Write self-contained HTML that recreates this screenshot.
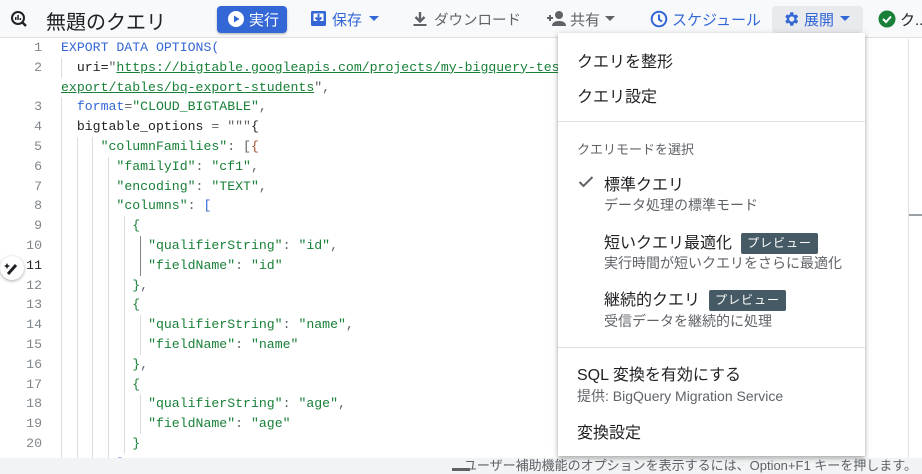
<!DOCTYPE html>
<html><head><meta charset="utf-8"><style>
*{margin:0;padding:0;box-sizing:border-box}
body{width:922px;height:474px;overflow:hidden;background:#fff;font-family:"Liberation Sans","Noto Sans CJK JP",sans-serif;position:relative}
.hdr{position:absolute;left:0;top:0;width:922px;height:38px;background:#f8f9fa;border-bottom:1px solid #e0e0e0}
.ab{position:absolute;white-space:nowrap}
.code{position:absolute;left:0;top:38px;width:922px;height:420px;overflow:hidden;font-family:"Liberation Mono",monospace;font-size:13.2px}
.row{position:absolute;left:0;height:19.8px;line-height:19.8px;width:922px}
.ln{position:absolute;left:0;width:42px;text-align:right;color:#80868b}
.tx{position:absolute;left:61px;white-space:pre;color:#202124}
.g{position:absolute;top:0;width:1px;height:19.8px;background:#dadce0}
.k{color:#3367d6}.s{color:#188038}.p{color:#5f6368}.u{color:#188038;text-decoration:underline}
.menu{position:absolute;left:558px;top:33px;width:307px;height:423px;background:#fff;box-shadow:0 2px 4px rgba(0,0,0,.3),0 1px 8px rgba(0,0,0,.1);color:#202124}
.menu .ab{font-size:16px}
.menu .sub{font-size:14px;color:#5f6368}
.menu .sm{font-size:13px;color:#5f6368}
.bd{display:inline-block;background:#455a64;color:#fff;font-size:12px;padding:0 6px;line-height:21px;height:21px;border-radius:2px;margin-left:9px;vertical-align:middle;letter-spacing:1px}
.div{position:absolute;left:0;width:307px;height:1px;background:#e0e0e0}
</style></head><body>
<div class="hdr">
 <svg class="ab" style="left:10px;top:10px" width="18" height="18" viewBox="0 0 18 18"><circle cx="8" cy="8" r="6" fill="none" stroke="#202124" stroke-width="2"/><line x1="12" y1="12" x2="16" y2="16" stroke="#202124" stroke-width="2.4"/><rect x="5" y="7" width="1.5" height="3" fill="#202124"/><rect x="7.3" y="5" width="1.5" height="5" fill="#202124"/><rect x="9.6" y="8" width="1.5" height="2" fill="#202124"/></svg>
 <div class="ab" style="left:46px;top:6px;font-size:20px;color:#202124">無題のクエリ</div>
 <div class="ab" style="left:217px;top:6px;width:70px;height:27px;background:#3367d6;border-radius:4px;box-shadow:0 1px 2px rgba(0,0,0,.3)"></div>
 <svg class="ab" style="left:227px;top:10px" width="18" height="18"><circle cx="9" cy="9" r="8" fill="#fff"/><path d="M7 5.5L12.5 9L7 12.5Z" fill="#3367d6"/></svg>
 <div class="ab" style="left:249px;top:9px;font-size:15px;color:#fff">実行</div>
 <svg class="ab" style="left:310px;top:10px" width="17" height="17"><rect x="1" y="1" width="15" height="15" rx="1.5" fill="#3367d6"/><rect x="3.5" y="3.5" width="10" height="10" fill="#fff"/><path d="M8.5 4v6M5.5 7.5l3 3 3-3" stroke="#3367d6" stroke-width="2" fill="none"/><rect x="3.5" y="11" width="10" height="2.5" fill="#3367d6"/></svg>
 <div class="ab" style="left:332px;top:9px;font-size:15px;color:#3367d6">保存</div>
 <div class="ab" style="left:369px;top:16px;border:5px solid transparent;border-top-color:#3367d6;border-bottom:0"></div>
 <svg class="ab" style="left:412px;top:11px" width="16" height="16"><path d="M8 1v9M3.5 6l4.5 4.5L12.5 6" stroke="#5f6368" stroke-width="2.4" fill="none"/><rect x="1.5" y="13" width="13" height="2" fill="#5f6368"/></svg>
 <div class="ab" style="left:434px;top:9px;font-size:14.5px;color:#5f6368">ダウンロード</div>
 <svg class="ab" style="left:546px;top:10px" width="22" height="17"><path d="M1 8h6M4 5v6" stroke="#5f6368" stroke-width="2"/><circle cx="13" cy="5" r="4" fill="#5f6368"/><path d="M6 16c0-4 4-5 7-5s7 1 7 5z" fill="#5f6368"/></svg>
 <div class="ab" style="left:570px;top:9px;font-size:15px;color:#5f6368">共有</div>
 <div class="ab" style="left:605px;top:16px;border:5px solid transparent;border-top-color:#5f6368;border-bottom:0"></div>
 <svg class="ab" style="left:650px;top:10px" width="18" height="18"><circle cx="9" cy="9" r="7.3" fill="none" stroke="#3367d6" stroke-width="2"/><path d="M9 4.5v5l3 2" stroke="#3367d6" stroke-width="2" fill="none"/></svg>
 <div class="ab" style="left:672px;top:9px;font-size:15px;color:#3367d6">スケジュール</div>
 <div class="ab" style="left:772px;top:6px;width:91px;height:27px;background:#e8eaed;border-radius:4px"></div>
 <svg class="ab" style="left:782px;top:10px" width="18" height="18" viewBox="0 0 24 24"><path fill="#3367d6" d="M19.4 13a7.5 7.5 0 000-2l2.1-1.6-2-3.5-2.5 1a7.3 7.3 0 00-1.7-1L15 3h-4l-.4 2.9c-.6.3-1.2.6-1.7 1l-2.5-1-2 3.5L6.5 11a7.5 7.5 0 000 2l-2.1 1.6 2 3.5 2.5-1c.5.4 1.1.7 1.7 1L11 21h4l.4-2.9c.6-.3 1.2-.6 1.7-1l2.5 1 2-3.5zM13 15.5a3.5 3.5 0 110-7 3.5 3.5 0 010 7z"/></svg>
 <div class="ab" style="left:804px;top:9px;font-size:15px;color:#3367d6">展開</div>
 <div class="ab" style="left:840px;top:16px;border:5px solid transparent;border-top-color:#3367d6;border-bottom:0"></div>
 <svg class="ab" style="left:878px;top:10px" width="18" height="18"><circle cx="9" cy="9" r="8.5" fill="#188038"/><path d="M5 9l3 3 5-5.5" stroke="#fff" stroke-width="2" fill="none"/></svg>
 <div class="ab" style="left:900px;top:9px;font-size:15px;color:#202124">ク..</div>
</div>

<div class="code">
<div class="row" style="top:0"><span class="ln">1</span><span class="tx"><span class="k">EXPORT DATA OPTIONS(</span></span></div>
<div class="row" style="top:19.8px"><span class="ln">2</span><i class="g" style="left:61px"></i><span class="tx">  uri=<span class="p">"</span><span class="u">https://bigtable.googleapis.com/projects/my-bigquery-test/instances/bq-export-instance/tables/</span></span></div>
<div class="row" style="top:39.6px"><span class="tx"><span class="u">export/tables/bq-export-students</span><span class="p">",</span></span></div>
<div class="row" style="top:59.4px"><span class="ln">3</span><i class="g" style="left:61px"></i><span class="tx">  <span class="k">format</span><span class="p">=</span><span class="s">"CLOUD_BIGTABLE"</span><span class="p">,</span></span></div>
<div class="row" style="top:79.2px"><span class="ln">4</span><i class="g" style="left:61px"></i><span class="tx">  bigtable_options <span class="p">=</span> <span class="p">"""</span>{</span></div>
<div class="row" style="top:99px"><span class="ln">5</span><i class="g" style="left:61px"></i><i class="g" style="left:77px"></i><i class="g" style="left:92px"></i><span class="tx">     <span class="s">"columnFamilies"</span><span class="p">: [</span><span style="color:#a0522d">{</span></span></div>
<div class="row" style="top:118.8px"><span class="ln">6</span><i class="g" style="left:61px"></i><i class="g" style="left:77px"></i><i class="g" style="left:92px"></i><i class="g" style="left:108px"></i><span class="tx">       <span class="s">"familyId"</span><span class="p">: </span><span class="s">"cf1"</span><span class="p">,</span></span></div>
<div class="row" style="top:138.6px"><span class="ln">7</span><i class="g" style="left:61px"></i><i class="g" style="left:77px"></i><i class="g" style="left:92px"></i><i class="g" style="left:108px"></i><span class="tx">       <span class="s">"encoding"</span><span class="p">: </span><span class="s">"TEXT"</span><span class="p">,</span></span></div>
<div class="row" style="top:158.4px"><span class="ln">8</span><i class="g" style="left:61px"></i><i class="g" style="left:77px"></i><i class="g" style="left:92px"></i><i class="g" style="left:108px"></i><span class="tx">       <span class="s">"columns"</span><span class="p">: </span><span class="k">[</span></span></div>
<div class="row" style="top:178.2px"><span class="ln">9</span><i class="g" style="left:61px"></i><i class="g" style="left:77px"></i><i class="g" style="left:92px"></i><i class="g" style="left:108px"></i><i class="g" style="left:124px"></i><span class="tx">         <span class="s">{</span></span></div>
<div class="row" style="top:198px"><span class="ln">10</span><i class="g" style="left:61px"></i><i class="g" style="left:77px"></i><i class="g" style="left:92px"></i><i class="g" style="left:108px"></i><i class="g" style="left:124px"></i><i class="g" style="left:140px;background:#80868b"></i><span class="tx">           <span class="s">"qualifierString"</span><span class="p">: </span><span class="s">"id"</span><span class="p">,</span></span></div>
<div class="row" style="top:217.8px"><span class="ln" style="color:#202124">11</span><i class="g" style="left:61px"></i><i class="g" style="left:77px"></i><i class="g" style="left:92px"></i><i class="g" style="left:108px"></i><i class="g" style="left:124px"></i><i class="g" style="left:140px;background:#80868b"></i><span class="tx">           <span class="s">"fieldName"</span><span class="p">: </span><span class="s">"id"</span></span></div>
<div class="row" style="top:237.6px"><span class="ln">12</span><i class="g" style="left:61px"></i><i class="g" style="left:77px"></i><i class="g" style="left:92px"></i><i class="g" style="left:108px"></i><i class="g" style="left:124px"></i><span class="tx">         <span class="s">}</span><span class="p">,</span></span></div>
<div class="row" style="top:257.4px"><span class="ln">13</span><i class="g" style="left:61px"></i><i class="g" style="left:77px"></i><i class="g" style="left:92px"></i><i class="g" style="left:108px"></i><i class="g" style="left:124px"></i><span class="tx">         <span class="s">{</span></span></div>
<div class="row" style="top:277.2px"><span class="ln">14</span><i class="g" style="left:61px"></i><i class="g" style="left:77px"></i><i class="g" style="left:92px"></i><i class="g" style="left:108px"></i><i class="g" style="left:124px"></i><i class="g" style="left:140px"></i><span class="tx">           <span class="s">"qualifierString"</span><span class="p">: </span><span class="s">"name"</span><span class="p">,</span></span></div>
<div class="row" style="top:297px"><span class="ln">15</span><i class="g" style="left:61px"></i><i class="g" style="left:77px"></i><i class="g" style="left:92px"></i><i class="g" style="left:108px"></i><i class="g" style="left:124px"></i><i class="g" style="left:140px"></i><span class="tx">           <span class="s">"fieldName"</span><span class="p">: </span><span class="s">"name"</span></span></div>
<div class="row" style="top:316.8px"><span class="ln">16</span><i class="g" style="left:61px"></i><i class="g" style="left:77px"></i><i class="g" style="left:92px"></i><i class="g" style="left:108px"></i><i class="g" style="left:124px"></i><span class="tx">         <span class="s">}</span><span class="p">,</span></span></div>
<div class="row" style="top:336.6px"><span class="ln">17</span><i class="g" style="left:61px"></i><i class="g" style="left:77px"></i><i class="g" style="left:92px"></i><i class="g" style="left:108px"></i><i class="g" style="left:124px"></i><span class="tx">         <span class="s">{</span></span></div>
<div class="row" style="top:356.4px"><span class="ln">18</span><i class="g" style="left:61px"></i><i class="g" style="left:77px"></i><i class="g" style="left:92px"></i><i class="g" style="left:108px"></i><i class="g" style="left:124px"></i><i class="g" style="left:140px"></i><span class="tx">           <span class="s">"qualifierString"</span><span class="p">: </span><span class="s">"age"</span><span class="p">,</span></span></div>
<div class="row" style="top:376.2px"><span class="ln">19</span><i class="g" style="left:61px"></i><i class="g" style="left:77px"></i><i class="g" style="left:92px"></i><i class="g" style="left:108px"></i><i class="g" style="left:124px"></i><i class="g" style="left:140px"></i><span class="tx">           <span class="s">"fieldName"</span><span class="p">: </span><span class="s">"age"</span></span></div>
<div class="row" style="top:396px"><span class="ln">20</span><i class="g" style="left:61px"></i><i class="g" style="left:77px"></i><i class="g" style="left:92px"></i><i class="g" style="left:108px"></i><i class="g" style="left:124px"></i><span class="tx">         <span class="s">}</span></span></div>
<div class="row" style="top:415.8px"><i class="g" style="left:61px"></i><i class="g" style="left:77px"></i><i class="g" style="left:92px"></i><i class="g" style="left:108px"></i><span class="tx">       <span class="k">]</span></span></div>
</div>
<div class="ab" style="left:0;top:256px;width:24px;height:24px;border-radius:12px;background:#fff;box-shadow:0 1px 3px rgba(0,0,0,.35)"></div>
<svg class="ab" style="left:4px;top:260px" width="16" height="16"><path d="M4 14L12 5" stroke="#202124" stroke-width="3"/><path d="M3 3l1 2 2 1-2 1-1 2-1-2-2-1 2-1z" fill="#202124"/></svg>
<div class="ab" style="left:908px;top:39px;width:1px;height:419px;background:#e0e0e0"></div>
<div class="ab" style="left:909px;top:214px;width:13px;height:2px;background:#9aa0a6"></div>
<div class="ab" style="left:0;top:458px;width:922px;height:16px;background:#f1f3f4"></div>
<div class="ab" style="left:452px;top:468px;width:18px;height:3px;background:#5f6368"></div>
<div class="ab" style="right:5px;top:457px;font-size:13px;color:#5f6368;line-height:17px">ユーザー補助機能のオプションを表示するには、Option+F1 キーを押します。</div>

<div class="menu">
 <div class="ab" style="left:19px;top:15px">クエリを整形</div>
 <div class="ab" style="left:19px;top:50px">クエリ設定</div>
 <div class="div" style="top:88px"></div>
 <div class="ab sm" style="left:19px;top:106px">クエリモードを選択</div>
 <svg class="ab" style="left:20px;top:142px" width="16" height="14"><path d="M1.5 7l4 4 9-9" stroke="#5f6368" stroke-width="2" fill="none"/></svg>
 <div class="ab" style="left:46px;top:138px">標準クエリ</div>
 <div class="ab sub" style="left:46px;top:162px">データ処理の標準モード</div>
 <div class="ab" style="left:46px;top:196px">短いクエリ最適化<span class="bd">プレビュー</span></div>
 <div class="ab sub" style="left:46px;top:220px">実行時間が短いクエリをさらに最適化</div>
 <div class="ab" style="left:46px;top:253px">継続的クエリ<span class="bd">プレビュー</span></div>
 <div class="ab sub" style="left:46px;top:278px">受信データを継続的に処理</div>
 <div class="div" style="top:314px"></div>
 <div class="ab" style="left:19px;top:328px">SQL 変換を有効にする</div>
 <div class="ab sub" style="left:19px;top:353px">提供: BigQuery Migration Service</div>
 <div class="ab" style="left:19px;top:386px">変換設定</div>
</div>
</body></html>
